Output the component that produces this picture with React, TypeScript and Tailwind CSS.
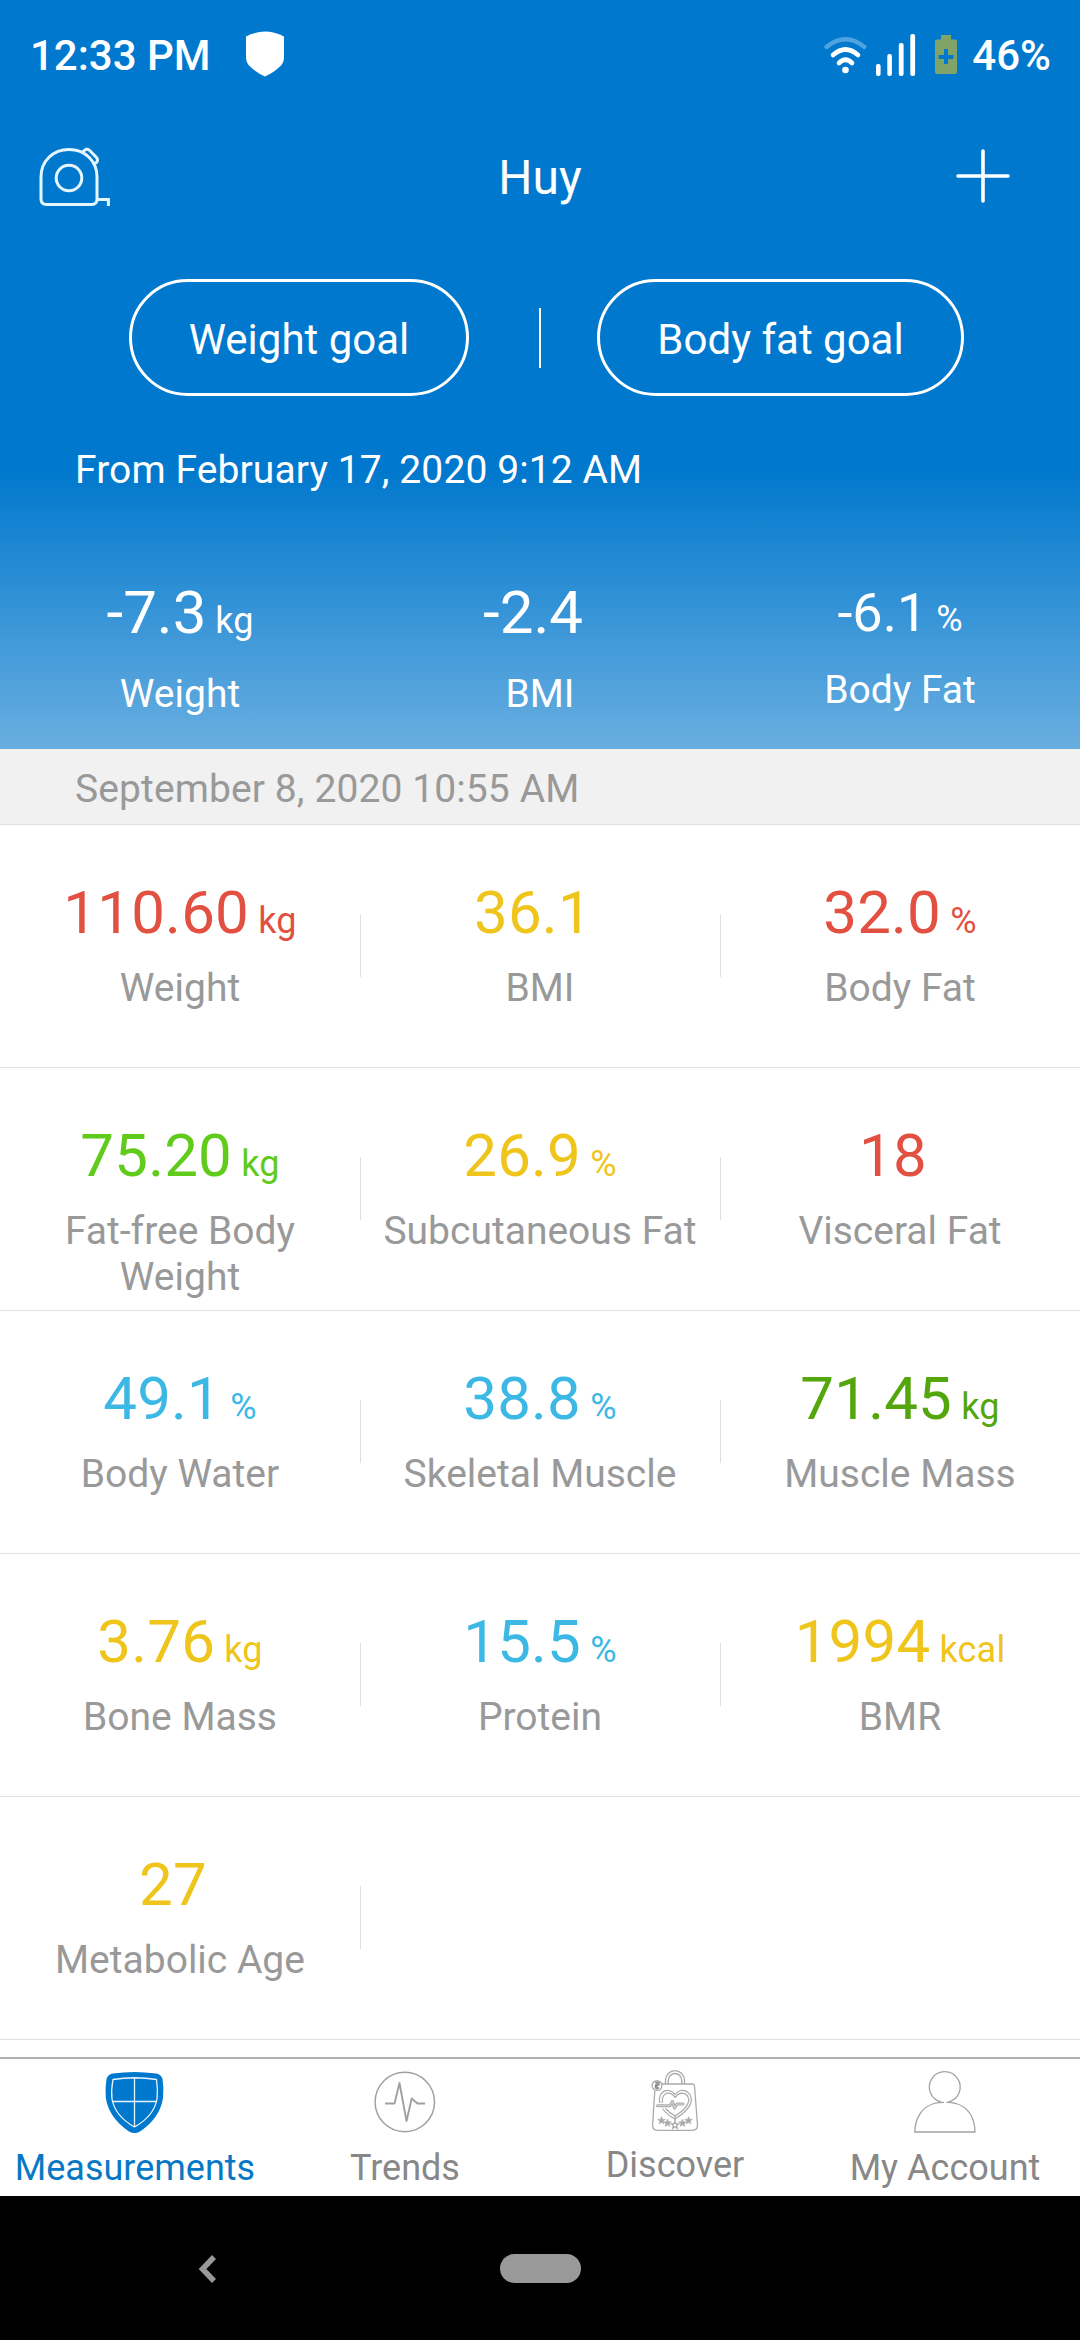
import type { ReactNode } from "react";

type Metric = { value: string; unit?: string; label: string; color: string };

const RED = "text-[#e25041]";
const YELLOW = "text-[#efc51c]";
const GREEN = "text-[#61cb1b]";
const DARK_GREEN = "text-[#54a60d]";
const BLUE = "text-[#3cb8e4]";

const rows: Metric[][] = [
  [
    { value: "110.60", unit: "kg", label: "Weight", color: RED },
    { value: "36.1", label: "BMI", color: YELLOW },
    { value: "32.0", unit: "%", label: "Body Fat", color: RED },
  ],
  [
    { value: "75.20", unit: "kg", label: "Fat-free Body Weight", color: GREEN },
    { value: "26.9", unit: "%", label: "Subcutaneous Fat", color: YELLOW },
    { value: "18", label: "Visceral Fat", color: RED },
  ],
  [
    { value: "49.1", unit: "%", label: "Body Water", color: BLUE },
    { value: "38.8", unit: "%", label: "Skeletal Muscle", color: BLUE },
    { value: "71.45", unit: "kg", label: "Muscle Mass", color: DARK_GREEN },
  ],
  [
    { value: "3.76", unit: "kg", label: "Bone Mass", color: YELLOW },
    { value: "15.5", unit: "%", label: "Protein", color: BLUE },
    { value: "1994", unit: "kcal", label: "BMR", color: YELLOW },
  ],
  [{ value: "27", label: "Metabolic Age", color: YELLOW }],
];

function StatusBar() {
  return (
    <div className="flex h-[111px] shrink-0 items-center justify-between pl-[30px] pr-[29px] text-[42px] font-medium leading-none">
      <div className="flex items-center">
        <span className="whitespace-pre">12:33 PM</span>
        <svg className="mb-[4px] ml-[35px]" width="38" height="46" viewBox="0 0 38 46" fill="#fff">
          <path d="M0 5.5Q10 .5 19 .5T38 5.5V26Q38 31 35 34.5Q28 41.500 19 45.500Q10 41.500 3 34.500Q0 31 0 26Z" />
        </svg>
      </div>
      <div className="flex items-center">
        <svg className="mb-[2px] mr-[14px]" width="134" height="46" viewBox="824 31 134 46" fill="none">
          <g strokeLinecap="round" stroke="#fff" strokeWidth="4.6">
            <path d="M826.500 46Q845.500 30.500 864.300 46" stroke="#4fa3e0" strokeWidth="4.300" />
            <path d="M833 54Q845.500 43 858 54" />
            <path d="M839 62Q845.500 55.500 852 62" />
          </g>
          <circle cx="845.500" cy="69" r="3.300" fill="#fff" />
          <g fill="#fff">
            <rect x="876" y="63" width="4.600" height="12" rx="2" />
            <rect x="887.300" y="53" width="4.600" height="22" rx="2" />
            <rect x="898.800" y="42" width="4.800" height="33" rx="2" />
            <rect x="910.300" y="33" width="4.800" height="42" rx="2" />
          </g>
          <path
            fill="#80a468"
            fillRule="evenodd"
            d="M941 34H951V38.500H955Q957 38.500 957 40.500V71Q957 73 955 73H937Q935 73 935 71V40.500Q935 38.500 937 38.500H941ZM944 48V54H938.500V58H944V63H948V58H953.500V54H948V48Z"
          />
        </svg>
        <span>46%</span>
      </div>
    </div>
  );
}

function TitleBar() {
  return (
    <div className="grid h-[133px] shrink-0 grid-cols-3 items-center pl-[38px] pr-[38px]">
      <svg width="74" height="62" viewBox="38 146 74 62" fill="none" stroke="#e6f6ff" strokeWidth="3" strokeLinejoin="round">
        <path d="M41 176C41 160 53 148.500 69 148.500S97 160 97 176V198Q97 203.500 91.500 203.500H46.500Q41 203.500 41 198Z" />
        <circle cx="69" cy="177" r="12.800" />
        <path d="M82 152L84.500 149.300Q87 147.300 89.500 149.300L96.500 156.500Q98.500 159 96.500 161.500L94 163" />
        <path d="M97 198.500H108.400V205" strokeLinejoin="miter" />
      </svg>
      <h1 className="text-center text-[48px] leading-none">Huy</h1>
      <svg className="mb-[4px] mr-[29px] justify-self-end" width="60" height="60" viewBox="-30 -30 60 60" stroke="#fff" strokeWidth="3.600" strokeLinecap="round">
        <path d="M-25 0H25M0 -25V25" />
      </svg>
    </div>
  );
}

function Change({ value, unit, label, small }: { value: string; unit?: string; label: string; small?: boolean }) {
  return (
    <div className="flex w-[360px] flex-col items-center">
      <div className={small ? "h-[70px] whitespace-pre text-[54px] leading-[70px]" : "h-[70px] whitespace-pre text-[60px] leading-[70px]"}>
        {value}
        <span className={unit ? "text-[36px] leading-none" : "mr-[5px] text-[36px] leading-none"}> {unit}</span>
      </div>
      <div className={small ? "mt-[19px] text-[39px] leading-[46px]" : "mt-[23px] text-[39px] leading-[46px]"}>{label}</div>
    </div>
  );
}

function Cell({ metric, last }: { metric: Metric; last: boolean }) {
  return (
    <div className="relative flex w-[360px] flex-col items-center px-[20px] pt-[53px]">
      <div className={`h-[70px] whitespace-pre text-[60px] leading-[70px] tracking-[0.2px] ${metric.color}`}>
        {metric.value}
        <span className={metric.unit ? "text-[36px] leading-none" : "mr-[5px] text-[36px] leading-none"}> {metric.unit}</span>
      </div>
      <div className="mt-[17px] text-center text-[39px] leading-[46px] text-[#999]">{metric.label}</div>
      {!last && <span className="absolute right-[-1px] top-[89px] h-[63px] w-px bg-[#e0e0e0]" />}
    </div>
  );
}

function Tab({ icon, label, active, raised }: { icon: ReactNode; label: string; active?: boolean; raised?: boolean }) {
  return (
    <div className={`flex w-[270px] flex-col items-center ${active ? "text-[#0878c4]" : "text-[#888]"}`}>
      {icon}
      <span className={raised ? "mt-[6px] text-[36px] leading-[42px]" : "mt-[9px] text-[36px] leading-[42px]"}>{label}</span>
    </div>
  );
}

const shieldIcon = (
  <svg className="mt-[11px]" width="70" height="68" viewBox="100 2070 70 68" fill="none">
    <path
      fill="#0078cd"
      d="M113 2073.500Q134.500 2070.500 156 2073.500Q161 2074 162.500 2079Q164 2088 163 2098Q160 2118 140 2131.500Q134.500 2134.500 129 2131.500Q109 2118 105.800 2098Q105 2088 106.500 2079Q108 2074 113 2073.500Z"
    />
    <path stroke="#e8f5ff" strokeWidth="1.300" d="M113 2079.500Q134.500 2076 156.500 2079.500Q158 2090 157 2099Q154 2116 134.500 2127Q115 2116 112 2099Q111 2090 113 2079.500ZM134.500 2077.500V2127M113 2101.500H156" />
  </svg>
);

const pulseIcon = (
  <svg className="mt-[11px]" width="70" height="68" viewBox="370 2070 70 68" fill="none" stroke="#a0a0a0">
    <circle cx="404.800" cy="2102" r="29.700" strokeWidth="1.500" />
    <path strokeWidth="1.900" strokeLinejoin="round" d="M385 2103.500H394.500L399.500 2083L406.500 2121L411.700 2098.500L417.500 2103.500H425" />
  </svg>
);

const STAR = "M0-4L1.100-1.200L4-1.200L1.700.700L2.500 3.600L0 1.900L-2.500 3.600L-1.700.700L-4-1.200L-1.100-1.200Z";

const bagIcon = (
  <svg className="mt-[11px]" width="70" height="68" viewBox="0 15 70 68" fill="none" stroke="#aaa" strokeWidth="1.300" strokeLinejoin="round">
    <path d="M25.500 29V25.200A9.500 9.500 0 0 1 44.500 25.200V29M28.300 29V25.200A6.700 6.700 0 0 1 41.700 25.200V29" />
    <path d="M21.500 29H52Q54.300 29 54.500 31L57.500 70Q57.500 75.300 52.500 75.300H17.500Q12.600 75.300 12.600 70L14.800 36" />
    <circle cx="17" cy="30.500" r="4.900" />
    <path d="M15 27.500H19V30H15.500V33H19M17 26.500V34.500" stroke="#888" />
    <path strokeWidth="1.200" d="M19.800 48C18 40 23 35 28.500 35.500Q32.500 36 35 39.300Q38 36 41 35.500C48 35 52.500 40.500 51 47.500Q48.500 56 35 64Q27 60 22.500 53.500M22.300 48C21.500 42 24.500 38 28.500 38.200Q33 38.700 35 42.500Q38 38.500 41.500 38.200C47 38.200 49.500 42.500 48.500 47Q46 54.500 35 61Q29 57.500 25.500 53.500" />
    <path stroke="#aaa" strokeWidth="3" strokeLinecap="round" d="M17.500 50.700H30L32.500 46.500L34.500 53L37 49H43" />
    <path stroke="#e8e8e8" strokeWidth=".7" strokeLinecap="round" d="M17.500 50.700H30L32.500 46.500L34.500 53L37 49H43" />
    <path d="M35 61V66" />
    <g fill="#aaa" stroke="#aaa" strokeWidth=".4">
      <path transform="translate(21.500 65.500)" d={STAR} />
      <path transform="translate(27.500 68)" d={STAR} />
      <path transform="translate(35 70) scale(1.200)" d={STAR} />
      <path transform="translate(42.500 68)" d={STAR} />
      <path transform="translate(48.500 65.500)" d={STAR} />
    </g>
    <circle cx="35" cy="70.300" r="1.300" fill="#fff" stroke="none" />
  </svg>
);

const personIcon = (
  <svg className="mt-[11px]" width="70" height="68" viewBox="910 2070 70 68" fill="none" stroke="#a3a3a3" strokeWidth="1.300">
    <path d="M941 2102A15.400 15.400 0 1 1 948.500 2102" />
    <path d="M944 2102.300Q938 2102.300 934 2103.500C922 2107 915 2118 914.800 2132H975C974.500 2117 967.500 2107 956 2103.500Q951 2102.200 946.500 2102.300" />
  </svg>
);

export default function App() {
  return (
    <div className="flex h-[2340px] w-[1080px] flex-col overflow-hidden bg-white font-['Roboto',sans-serif]">
      <header className="flex h-[749px] shrink-0 flex-col bg-[linear-gradient(to_bottom,#0078cd_0px,#0078cd_468px,#69aee0_749px)] text-white">
        <StatusBar />
        <TitleBar />
        <div className="mt-[35px] flex h-[117px] shrink-0 items-center pl-[129px]">
          <button className="flex h-full w-[340px] items-center justify-center rounded-full border-3 border-white pt-[4px] text-[42px] leading-none">Weight goal</button>
          <span className="ml-[70px] h-[60px] w-[2px] bg-white" />
          <button className="ml-[56px] flex h-full w-[367px] items-center justify-center rounded-full border-3 border-white pt-[4px] text-[42px] leading-none">Body fat goal</button>
        </div>
        <div className="h-[147px] shrink-0 pl-[75px] text-[39px] leading-[149px] tracking-[0.1px]">From February 17, 2020 9:12 AM</div>
        <div className="flex pt-[35px]">
          <Change value="-7.3" unit="kg" label="Weight" />
          <Change value="-2.4" label="BMI" />
          <Change value="-6.1" unit="%" label="Body Fat" small />
        </div>
      </header>
      <div className="h-[76px] shrink-0 border-b border-[#e0e0e0] bg-[#f1f1f1] pl-[75px] text-[39px] leading-[81px] tracking-[0.1px] text-[#999]">September 8, 2020 10:55 AM</div>
      <main className="h-[1232px] shrink-0">
        {rows.map((row, i) => (
          <div key={i} className="flex h-[243px] border-b border-[#e0e0e0]">
            {row.map((metric, j) => (
              <Cell key={metric.label} metric={metric} last={j === 2} />
            ))}
          </div>
        ))}
      </main>
      <nav className="flex h-[139px] shrink-0 border-t-2 border-[#b0b0b0] bg-white">
        <Tab icon={shieldIcon} label="Measurements" active />
        <Tab icon={pulseIcon} label="Trends" />
        <Tab icon={bagIcon} label="Discover" raised />
        <Tab icon={personIcon} label="My Account" />
      </nav>
      <footer className="flex h-[144px] shrink-0 items-center bg-black pt-px">
        <svg className="ml-[196px]" width="24" height="32" viewBox="196 2252 24 32" fill="none" stroke="#999" strokeWidth="5.500">
          <path d="M214 2256L202.500 2268L214 2280" />
        </svg>
        <span className="ml-[280px] h-[29px] w-[81px] rounded-full bg-[#999]" />
      </footer>
    </div>
  );
}
